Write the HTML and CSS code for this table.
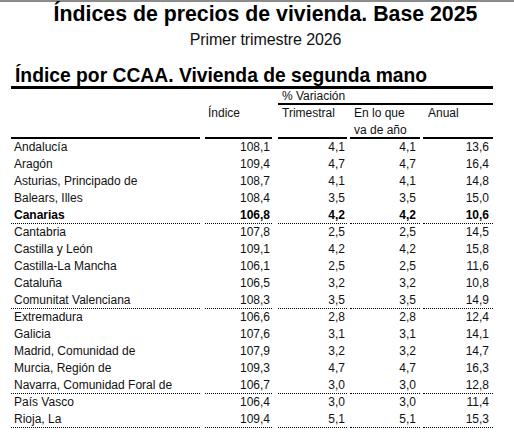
FILE: index.html
```html
<!DOCTYPE html>
<html lang="es">
<head>
<meta charset="utf-8">
<title>Índices de precios de vivienda</title>
<link rel="stylesheet" href="styles.css">
</head>
<body>
<div class="page">
  <h1 class="title">Índices de precios de vivienda. Base 2025</h1>
  <p class="subtitle">Primer trimestre 2026</p>
  <div class="sheet">
    <h2 class="section">Índice por CCAA. Vivienda de segunda mano</h2>
    <div class="grid">
      <div class="h1c c1"></div>
      <div class="h1c c2"></div>
      <div class="h1c var">% Variación</div>

      <div class="h2c c1"></div>
      <div class="h2c c2">Índice</div>
      <div class="h2c c3">Trimestral</div>
      <div class="h2c c4">En lo que<br>va de año</div>
      <div class="h2c c5">Anual</div>

      <div class="c1 lab">Andalucía</div><div class="c2 num">108,1</div><div class="c3 num">4,1</div><div class="c4 num">4,1</div><div class="c5 num">13,6</div>
      <div class="c1 lab">Aragón</div><div class="c2 num">109,4</div><div class="c3 num">4,7</div><div class="c4 num">4,7</div><div class="c5 num">16,4</div>
      <div class="c1 lab">Asturias, Principado de</div><div class="c2 num">108,7</div><div class="c3 num">4,1</div><div class="c4 num">4,1</div><div class="c5 num">14,8</div>
      <div class="c1 lab">Balears, Illes</div><div class="c2 num">108,4</div><div class="c3 num">3,5</div><div class="c4 num">3,5</div><div class="c5 num">15,0</div>
      <div class="c1 lab b sep">Canarias</div><div class="c2 num b sep">106,8</div><div class="c3 num b sep">4,2</div><div class="c4 num b sep">4,2</div><div class="c5 num b sep">10,6</div>
      <div class="c1 lab">Cantabria</div><div class="c2 num">107,8</div><div class="c3 num">2,5</div><div class="c4 num">2,5</div><div class="c5 num">14,5</div>
      <div class="c1 lab">Castilla y León</div><div class="c2 num">109,1</div><div class="c3 num">4,2</div><div class="c4 num">4,2</div><div class="c5 num">15,8</div>
      <div class="c1 lab">Castilla-La Mancha</div><div class="c2 num">106,1</div><div class="c3 num">2,5</div><div class="c4 num">2,5</div><div class="c5 num">11,6</div>
      <div class="c1 lab">Cataluña</div><div class="c2 num">106,5</div><div class="c3 num">3,2</div><div class="c4 num">3,2</div><div class="c5 num">10,8</div>
      <div class="c1 lab sep">Comunitat Valenciana</div><div class="c2 num sep">108,3</div><div class="c3 num sep">3,5</div><div class="c4 num sep">3,5</div><div class="c5 num sep">14,9</div>
      <div class="c1 lab">Extremadura</div><div class="c2 num">106,6</div><div class="c3 num">2,8</div><div class="c4 num">2,8</div><div class="c5 num">12,4</div>
      <div class="c1 lab">Galicia</div><div class="c2 num">107,6</div><div class="c3 num">3,1</div><div class="c4 num">3,1</div><div class="c5 num">14,1</div>
      <div class="c1 lab">Madrid, Comunidad de</div><div class="c2 num">107,9</div><div class="c3 num">3,2</div><div class="c4 num">3,2</div><div class="c5 num">14,7</div>
      <div class="c1 lab">Murcia, Región de</div><div class="c2 num">109,3</div><div class="c3 num">4,7</div><div class="c4 num">4,7</div><div class="c5 num">16,3</div>
      <div class="c1 lab sep">Navarra, Comunidad Foral de</div><div class="c2 num sep">106,7</div><div class="c3 num sep">3,0</div><div class="c4 num sep">3,0</div><div class="c5 num sep">12,8</div>
      <div class="c1 lab">País Vasco</div><div class="c2 num">106,4</div><div class="c3 num">3,0</div><div class="c4 num">3,0</div><div class="c5 num">11,4</div>
      <div class="c1 lab sep">Rioja, La</div><div class="c2 num sep">109,4</div><div class="c3 num sep">5,1</div><div class="c4 num sep">5,1</div><div class="c5 num sep">15,3</div>
    </div>
  </div>
</div>
</body>
</html>
```

FILE: styles.css
```css
* { box-sizing: border-box; }

html, body {
  margin: 0;
  padding: 0;
  background: #fff;
}

body {
  font-family: "Liberation Sans", Arial, sans-serif;
  color: #111;
  width: 514px;
  height: 432px;
  overflow: hidden;
}

.page {
  border-top: 2px solid #8c8c8c;
}

.title {
  margin: 0;
  padding-left: 17px;
  text-align: center;
  font-size: 21.3px;
  line-height: 24px;
  font-weight: bold;
  color: #000;
}

.subtitle {
  margin: 5px 0 0;
  padding-left: 17px;
  text-align: center;
  font-size: 16px;
  line-height: 18px;
  letter-spacing: -0.1px;
  color: #111;
}

.sheet {
  margin: 16px 0 0 11px;
  width: 482px;
}

.section {
  margin: 0;
  padding-left: 4px;
  font-size: 19.3px;
  line-height: 21px;
  font-weight: bold;
  color: #000;
  border-bottom: 3px solid #000;
}

.grid {
  display: grid;
  grid-template-columns: 189px 72px 75px 73px 73px;
  font-size: 12px;
}

.c2 { margin-left: 5px; }
.c3 { margin-left: 6px; }
.c4 { margin-left: 3px; }
.c5 { margin-left: 3px; }

.h1c {
  height: 16px;
  line-height: 14px;
}

.var {
  grid-column: 3 / 6;
  margin-left: 6px;
  padding-left: 4px;
  border-bottom: 2px solid #000;
}

.h2c {
  height: 34px;
  line-height: 17px;
  padding-top: 0;
  border-bottom: 2px solid #000;
}

.h2c.c2 { padding-left: 3px; }
.h2c.c3 { padding-left: 4px; }
.h2c.c4 { padding-left: 4px; }
.h2c.c5 { padding-left: 5px; }

.lab,
.num {
  height: 17px;
  line-height: 17px;
  white-space: nowrap;
}

.lab { padding-left: 3px; }

.num { text-align: right; }
.c2.num { padding-right: 2px; }
.c3.num { padding-right: 2px; }
.c4.num { padding-right: 4px; }
.c5.num { padding-right: 4px; }

.b { font-weight: bold; color: #000; }

.sep {
  border-bottom: 1px dotted #000;
  line-height: 16px;
}
```
